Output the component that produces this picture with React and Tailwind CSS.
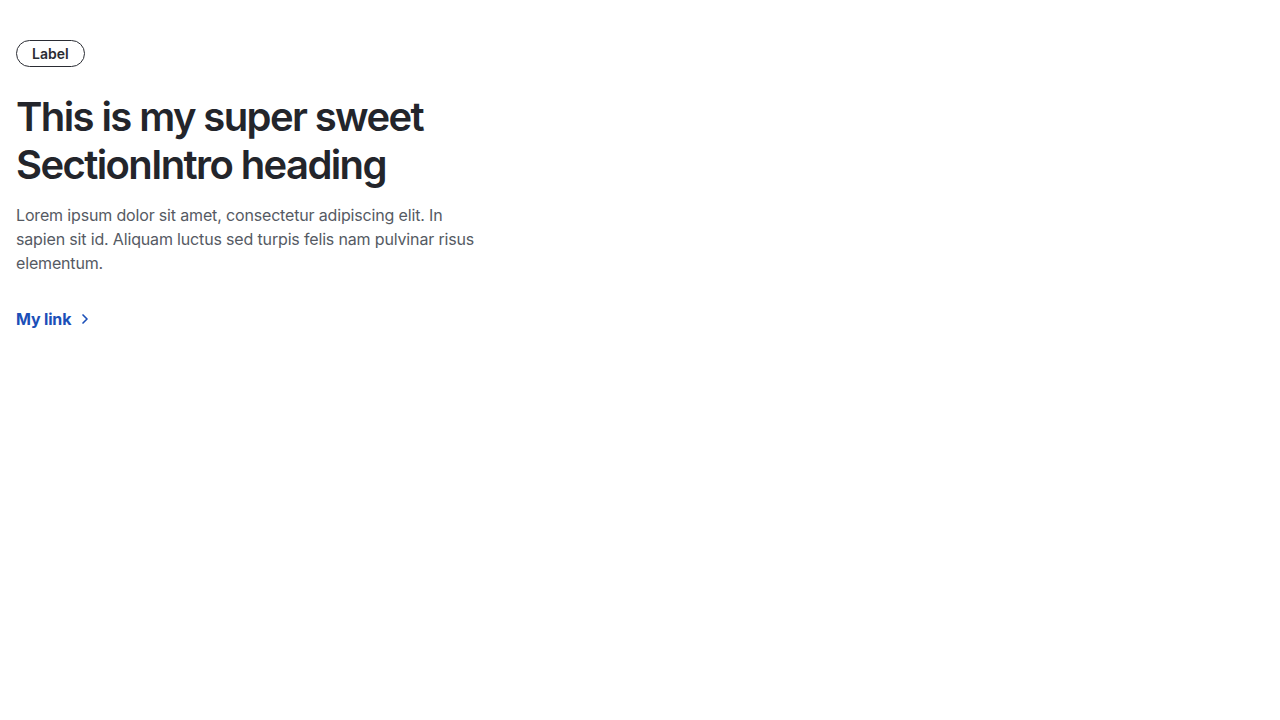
import { ChevronRight } from 'lucide-react';

export default function App() {
  return (
    <div className="min-h-screen bg-white px-4 pt-10" style={{ fontFamily: 'Inter, "Noto Sans", sans-serif' }}>
      <div className="max-w-[466px]">
        <span className="inline-flex h-[27px] items-center rounded-full border border-[#2a2c33] px-[15px] text-sm font-semibold text-[#2a2c33]">
          Label
        </span>
        <h2 className="mt-[26px] text-[40px] font-semibold leading-[48px] tracking-[-0.04em] text-[#23252b]">
          This is my super sweet SectionIntro heading
        </h2>
        <p className="mt-[14px] text-base leading-6 tracking-[-0.01em] text-[#555a63]">
          Lorem ipsum dolor sit amet, consectetur adipiscing elit. In sapien sit id. Aliquam luctus sed turpis felis nam pulvinar risus elementum.
        </p>
        <a href="#" className="mt-[32px] inline-flex items-center gap-1.5 text-base font-bold tracking-[-0.01em] text-[#1b4fb8]">
          My link
          <ChevronRight size={16} strokeWidth={2.5} />
        </a>
      </div>
    </div>
  );
}
